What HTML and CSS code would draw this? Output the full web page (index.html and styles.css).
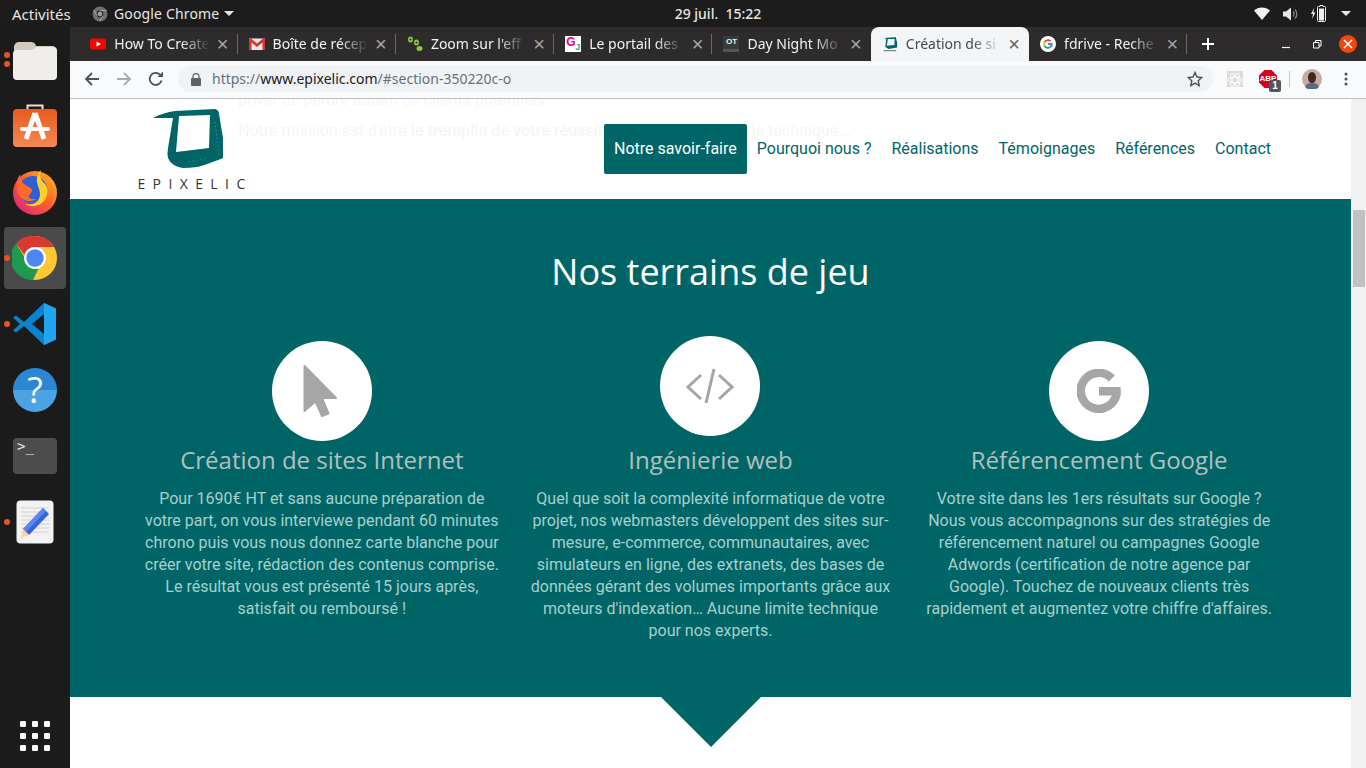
FILE: index.html
```html
<!DOCTYPE html>
<html lang="fr">
<head>
  <meta charset="UTF-8" />
  <title>Création de sites Internet - Epixelic</title>
  <meta name="viewport" content="width=device-width, initial-scale=1.0" />
  <link rel="stylesheet" href="styles.css">
</head>
<body>
  <!-- Ubuntu top bar -->
  <div class="topbar">
    <div class="topbar-left">
      <span class="activities">Activités</span>
      <svg class="app-icon" width="16" height="16" viewBox="0 0 16 16"><circle cx="8" cy="8" r="7.5" fill="#6e6e6e"/><circle cx="8" cy="8" r="3.4" fill="#1c1c1c"/><circle cx="8" cy="8" r="2.4" fill="#9a9a9a"/><path d="M8 4.6h6.6M5 9.8 2 4M11 9.8 7.5 15" stroke="#a8a8a8" stroke-width="1"/></svg>
      <span class="app-name">Google Chrome</span>
      <span class="caret"></span>
    </div>
    <div class="clock">29 juil.&nbsp;&nbsp;15:22</div>
    <div class="tray">
      <svg width="16" height="13" viewBox="0 0 16 13"><path d="M0 3.6C4.4-.6 11.600-.6 16 3.600L8 13z" fill="#f2f2f2"/></svg>
      <svg width="15" height="14" viewBox="0 0 15 14"><path d="M0 4.500h3L8 .5v13L3 9.500H0z" fill="#e6e6e6"/><path d="M10 4.500a3.500 3.500 0 0 1 0 5M12 2.500a6.500 6.500 0 0 1 0 9" fill="none" stroke="#888" stroke-width="1.200"/></svg>
      <svg width="15" height="17" viewBox="0 0 15 17"><path d="M3 3 0 9h2l-1 5 3.500-6.500h-2z" fill="#eee"/><path d="M8 1.500h1V.5h3v1h1.500a1 1 0 0 1 1 1v13a1 1 0 0 1-1 1H7.500a1 1 0 0 1-1-1v-13a1 1 0 0 1 1-1z" fill="none" stroke="#eee"/><rect x="8" y="3.500" width="5" height="12" fill="#eee"/></svg>
      <span class="caret"></span>
    </div>
  </div>

  <div class="desktop">
    <!-- launcher -->
    <aside class="dock">
      <div class="dock-item">
        <span class="dot dot-a"></span><span class="dot dot-b"></span>
        <svg width="46" height="42" viewBox="0 0 46 42"><path d="M2 8a5 5 0 0 1 5-5h12q4 0 5 4h16a5 5 0 0 1 5 5v24a5 5 0 0 1-5 5H7a5 5 0 0 1-5-5z" fill="#cfcbbf"/><path d="M1 15a4 4 0 0 1 4-4h14q3 0 5-3h17a4 4 0 0 1 4 4v25a4 4 0 0 1-4 4H5a4 4 0 0 1-4-4z" fill="#efeeea"/></svg>
      </div>
      <div class="dock-item">
        <svg width="46" height="46" viewBox="0 0 46 46"><defs><linearGradient id="bag" x1="0" y1="0" x2="0" y2="1"><stop offset="0" stop-color="#e95a1c"/><stop offset="1" stop-color="#f28a54"/></linearGradient></defs><path d="M15.500 9V2.500h15V9" fill="none" stroke="#f3dccd" stroke-width="2"/><rect x="1" y="6" width="44" height="38" rx="4" fill="url(#bag)"/><path d="M23 10 14 36M23 10l9 26" fill="none" stroke="#fff" stroke-width="5"/><rect x="8" y="24" width="30" height="4" rx="2" fill="#fff"/></svg>
      </div>
      <div class="dock-item">
        <svg width="46" height="46" viewBox="0 0 46 46"><defs><linearGradient id="fx" x1="1" y1="0" x2="0" y2="1"><stop offset="0" stop-color="#ffc21f"/><stop offset=".5" stop-color="#ff5a2c"/><stop offset="1" stop-color="#d41c8f"/></linearGradient></defs><circle cx="23" cy="24" r="22" fill="url(#fx)"/><circle cx="21" cy="21" r="14" fill="#2f5fd6"/><path d="M29 1c-2 6 0 10 4 14 4 5 3 14-3 19-5 4-12 4-17 1 9 2 15-3 15-10 0-6-4-9-3-16 1-4 2-6 4-8z" fill="#ffd02a"/><path d="M8 5c0 6 2 9 7 12 5 2 7 5 3 8-3 3 0 6 7 5-8 5-18 1-20-9-1-6 0-11 3-16z" fill="#ff6a2a"/></svg>
      </div>
      <div class="dock-item is-active">
        <span class="dot"></span>
        <svg width="46" height="46" viewBox="0 0 46 46"><circle cx="23" cy="23" r="22" fill="#fcc934"/><path d="M23 1a22 22 0 0 1 19 11H23a11 11 0 0 0-10.500 8L4 8.500A22 22 0 0 1 23 1z" fill="#d93a2f"/><path d="M4 8.500 13 23a11 11 0 0 0 13.500 10.500L21 45A22 22 0 0 1 4 8.500z" fill="#1e9a4e"/><circle cx="23" cy="23" r="11" fill="#fff"/><circle cx="23" cy="23" r="8.700" fill="#4c86f0"/></svg>
      </div>
      <div class="dock-item">
        <span class="dot"></span>
        <svg width="44" height="44" viewBox="0 0 44 44"><path d="M31 1 43 6.500v31L31 43 11 24 3 30.500 0 28.500 7 22 0 15.500 3 13.500l8 6.500z" fill="#0a84cf"/><path d="M31 1 43 6.500v31L31 43z" fill="#22a5f1"/><path d="M31 12 19 22l12 10z" fill="#1b1b1b"/></svg>
      </div>
      <div class="dock-item">
        <div class="help-icon">?</div>
      </div>
      <div class="dock-item">
        <div class="term-icon">&gt;_</div>
      </div>
      <div class="dock-item">
        <span class="dot"></span>
        <svg width="38" height="44" viewBox="0 0 38 44"><rect x=".5" y=".5" width="37" height="43" rx="4" fill="#f2f2f2"/><path d="M5 8h28M5 12h28M5 16h28M5 20h28M5 24h28M5 28h28M5 32h28" stroke="#d2d2d2"/><path d="M27 8l6 6-20 21-6-6z" fill="#3764d8"/><path d="M27 8l3 3-20 21-3-3z" fill="#5a86ee"/><path d="M7 29l6 6-8 3z" fill="#f5d6a8"/></svg>
      </div>
      <div class="apps-grid">
        <i></i><i></i><i></i><i></i><i></i><i></i><i></i><i></i><i></i>
      </div>
    </aside>

    <div class="window">
      <!-- tabs -->
      <div class="tabstrip">
        <div class="tab">
          <svg class="favicon" width="16" height="16" viewBox="0 0 16 16"><rect y="2.500" width="16" height="11" rx="3" fill="#f00"/><path d="M6.500 5.500 11 8l-4.500 2.500z" fill="#fff"/></svg>
          <span class="tab-title">How To Create</span><span class="tab-close">×</span>
        </div>
        <div class="tab">
          <svg class="favicon" width="16" height="16" viewBox="0 0 16 16"><rect y="2.500" width="16" height="11.500" fill="#e8e8e8"/><path d="M0 2.500h2l6 5 6-5h2V14h-2.500V6.500L8 11 2.500 6.500V14H0z" fill="#d9352b"/></svg>
          <span class="tab-title">Boîte de récep</span><span class="tab-close">×</span>
        </div>
        <div class="tab">
          <svg class="favicon" width="16" height="16" viewBox="0 0 16 16"><ellipse cx="3.500" cy="3.500" rx="2.500" ry="3" fill="#8dc63f"/><ellipse cx="9.500" cy="6.500" rx="2.500" ry="3" fill="#8dc63f"/><ellipse cx="12.500" cy="12.500" rx="3" ry="2.500" fill="#8dc63f"/><circle cx="3.500" cy="3.500" r="1" fill="#2d2b2c"/><circle cx="9.500" cy="6.500" r="1" fill="#2d2b2c"/></svg>
          <span class="tab-title">Zoom sur l'eff</span><span class="tab-close">×</span>
        </div>
        <div class="tab">
          <span class="favicon fav-gj"><b>G</b><i>J</i></span>
          <span class="tab-title">Le portail des</span><span class="tab-close">×</span>
        </div>
        <div class="tab">
          <span class="favicon fav-ot">OT</span>
          <span class="tab-title">Day Night Mo</span><span class="tab-close">×</span>
        </div>
        <div class="tab is-active">
          <svg class="favicon" width="16" height="16" viewBox="0 0 72 72"><path fill-rule="evenodd" fill="#006567" d="M10 10 22 8l40-2 6 24v22l-38 7-15-9 4-38zM26 14l-4 30 34-4 1-27z"/><path d="M8 66h56" stroke="#777" stroke-width="5"/></svg>
          <span class="tab-title">Création de si</span><span class="tab-close">×</span>
        </div>
        <div class="tab">
          <svg class="favicon" width="16" height="16" viewBox="0 0 16 16"><circle cx="8" cy="8" r="8" fill="#fff"/><path d="M8 3.200a4.800 4.800 0 0 1 3.200 1.200l-1.200 1.300A3 3 0 0 0 5.200 7L3.700 5.800A4.800 4.800 0 0 1 8 3.200z" fill="#ea4335"/><path d="M3.700 5.800 5.200 7a3 3 0 0 0 0 2L3.700 10.200a4.800 4.800 0 0 1 0-4.400z" fill="#fbbc05"/><path d="M3.700 10.200 5.200 9a3 3 0 0 0 4.400 1.600l1.400 1.100A4.800 4.800 0 0 1 3.700 10.200z" fill="#34a853"/><path d="M8.100 7.100h4.600a5 5 0 0 1-1.700 4.600L9.600 10.600a2 2 0 0 0 .9-1.700H8.100z" fill="#4285f4"/></svg>
          <span class="tab-title">fdrive - Reche</span><span class="tab-close">×</span>
        </div>
        <div class="new-tab">
          <svg width="12" height="12" viewBox="0 0 12 12"><path d="M6 0v12M0 6h12" stroke="#fff" stroke-width="2"/></svg>
        </div>
        <div class="win-controls">
          <svg width="10" height="10" viewBox="0 0 10 10"><path d="M1 8.500h8" stroke="#fff" stroke-width="1.200"/></svg>
          <svg width="10" height="10" viewBox="0 0 10 10"><path d="M1.500 3.500h5.500v5.500H1.500zM3.500 3.500V1.500H9V7H7" fill="none" stroke="#fff"/></svg>
          <span class="win-close"><svg width="10" height="10" viewBox="0 0 10 10"><path d="M1 1l8 8M9 1l-8 8" stroke="#fff" stroke-width="1.500"/></svg></span>
        </div>
      </div>

      <!-- address bar -->
      <div class="toolbar">
        <svg class="tool" width="16" height="16" viewBox="0 0 16 16"><path d="M15 8H2M8 2 2 8l6 6" fill="none" stroke="#4d5156" stroke-width="1.800"/></svg>
        <svg class="tool" width="16" height="16" viewBox="0 0 16 16"><path d="M1 8h13M8 2l6 6-6 6" fill="none" stroke="#a8abae" stroke-width="1.800"/></svg>
        <svg class="tool" width="16" height="16" viewBox="0 0 16 16"><path d="M13.500 9.500A6 6 0 1 1 12 3.700" fill="none" stroke="#4d5156" stroke-width="1.800"/><path d="M9.500 6H15V.5z" fill="#4d5156"/></svg>
        <div class="omnibox">
          <svg width="10" height="13" viewBox="0 0 10 13"><path d="M2 5.500V3.500a3 3 0 0 1 6 0v2" fill="none" stroke="#5f6368" stroke-width="1.300"/><rect y="5" width="10" height="8" rx="1" fill="#5f6368"/></svg>
          <span class="url"><span class="url-dim">https://</span>www.epixelic.com<span class="url-dim">/#section-350220c-o</span></span>
          <svg class="star" width="16" height="16" viewBox="0 0 16 16"><path d="m8 1.500 2 4.500 4.800.5-3.600 3.200 1 4.800L8 12.100l-4.200 2.400 1-4.800L1.200 6.500 6 6z" fill="none" stroke="#4d5156" stroke-width="1.400"/></svg>
        </div>
        <div class="ext-atom">
          <svg width="16" height="16" viewBox="0 0 16 16"><g fill="none" stroke="#fff"><ellipse cx="8" cy="8" rx="7" ry="3"/><ellipse cx="8" cy="8" rx="7" ry="3" transform="rotate(60 8 8)"/><ellipse cx="8" cy="8" rx="7" ry="3" transform="rotate(120 8 8)"/></g></svg>
        </div>
        <div class="ext-abp">
          <span class="abp-sign">ABP</span>
          <span class="abp-count">1</span>
        </div>
        <span class="tool-sep"></span>
        <svg class="avatar" width="20" height="20" viewBox="0 0 20 20"><circle cx="10" cy="10" r="10" fill="#c9aaa4"/><path d="M3 18q1-4 7-4t7 4a10 10 0 0 1-14 0z" fill="#5a6a8a"/><ellipse cx="10" cy="8.500" rx="4" ry="5.500" fill="#3d2a22"/></svg>
        <svg class="menu-dots" width="4" height="14" viewBox="0 0 4 14"><circle cx="2" cy="2" r="1.500"/><circle cx="2" cy="7" r="1.500"/><circle cx="2" cy="12" r="1.500"/></svg>
      </div>

      <div class="viewport">
        <main class="page">
          <header class="site-header">
            <div class="ghost-text">
              <p>priver de perdre autant de clients potentiels.</p>
              <p>Notre mission est d'être <b>le tremplin de votre réussite</b>, nous gérons toute la technique...</p>
            </div>
            <a class="logo">
              <svg width="72" height="62" viewBox="0 0 72 62"><path fill-rule="evenodd" fill="#006567" d="M0 10C8 6 14 4 22 3L62 1Q66 2 66 6L70 30V50Q50 58 44 59 36 60 30 60Q18 58 15 50Q14 46 15 40L20 10Q10 10 0 10ZM26 8 23 44 56 40 57 7Z"/><path d="M36 54l18-4M62 14l4 34" stroke="#6fa8a8" stroke-width=".8" stroke-dasharray="1 3" fill="none"/></svg>
              <span class="logo-name">EPIXELIC</span>
            </a>
            <nav class="nav">
              <a class="nav-link is-current">Notre savoir-faire</a>
              <a class="nav-link">Pourquoi nous ?</a>
              <a class="nav-link">Réalisations</a>
              <a class="nav-link">Témoignages</a>
              <a class="nav-link">Références</a>
              <a class="nav-link">Contact</a>
            </nav>
          </header>

          <section class="skills">
            <h2>Nos terrains de jeu</h2>
            <div class="skills-grid">
              <article class="skill">
                <div class="skill-icon">
                  <svg width="38" height="54" viewBox="0 0 38 54"><path d="M1.500 2V47L12.500 37.500 19 52 25.500 49.500 19 34H33z" fill="#a6a6a6" stroke="#a6a6a6" stroke-width="2" stroke-linejoin="round"/></svg>
                </div>
                <h3>Création de sites Internet</h3>
                <p>Pour 1690€ HT et sans aucune préparation de votre part, on vous interviewe pendant 60 minutes chrono puis vous nous donnez carte blanche pour créer votre site, rédaction des contenus comprise. Le résultat vous est présenté 15 jours après, satisfait ou remboursé !</p>
              </article>
              <article class="skill">
                <div class="skill-icon is-raised">
                  <svg width="48" height="38" viewBox="0 0 48 38"><path d="M15 8 2 20l13 12M33 8l13 12-13 12M28 2l-8 34" fill="none" stroke="#a6a6a6" stroke-width="3"/></svg>
                </div>
                <h3>Ingénierie web</h3>
                <p>Quel que soit la complexité informatique de votre projet, nos webmasters développent des sites sur-mesure, e-commerce, communautaires, avec simulateurs en ligne, des extranets, des bases de données gérant des volumes importants grâce aux moteurs d'indexation… Aucune limite technique pour nos experts.</p>
              </article>
              <article class="skill">
                <div class="skill-icon">
                  <svg width="44" height="44" viewBox="0 0 44 44"><path d="M34.800 9.500A18 18 0 1 0 39.600 24" fill="none" stroke="#a6a6a6" stroke-width="8.500"/><path d="M22 18H43.500Q44 22 43.500 26.500H22z" fill="#a6a6a6"/></svg>
                </div>
                <h3>Référencement Google</h3>
                <p>Votre site dans les 1ers résultats sur Google ? Nous vous accompagnons sur des stratégies de référencement naturel ou campagnes Google Adwords (certification de notre agence par Google). Touchez de nouveaux clients très rapidement et augmentez votre chiffre d'affaires.</p>
              </article>
            </div>
            <span class="skills-arrow"></span>
          </section>
        </main>
        <div class="scrollbar"><span class="scroll-thumb"></span></div>
      </div>
    </div>
  </div>
</body>
</html>
```

FILE: styles.css
```css
* {
  box-sizing: border-box;
}

html,
body {
  margin: 0;
  height: 100%;
  overflow: hidden;
}

body {
  display: flex;
  flex-direction: column;
  font-family: 'Open Sans', 'Noto Sans', sans-serif;
  background: #1b1b1b;
}

/* top bar */
.topbar {
  height: 27px;
  flex: none;
  display: grid;
  grid-template-columns: 1fr auto 1fr;
  align-items: center;
  background: #1c1c1c;
  color: #e6e6e6;
  font-family: 'Noto Sans', sans-serif;
  font-size: 14px;
}

.topbar-left {
  display: flex;
  align-items: center;
  padding-left: 12px;
}

.activities {
  width: 80px;
  font-size: 15px;
}

.app-name {
  margin-left: 6px;
  letter-spacing: 0.15px;
}

.caret {
  width: 0;
  height: 0;
  margin-left: 5px;
  border-left: 5px solid transparent;
  border-right: 5px solid transparent;
  border-top: 5px solid #e6e6e6;
}

.clock {
  padding-left: 70px;
  font-weight: 500;
}

.tray {
  display: flex;
  align-items: center;
  justify-content: flex-end;
  gap: 13px;
  padding-right: 15px;
}

.tray .caret {
  margin-left: 2px;
}

.desktop {
  flex: 1;
  display: flex;
  min-height: 0;
}

/* launcher */
.dock {
  width: 70px;
  flex: none;
  display: flex;
  flex-direction: column;
  background: #1b1b1b;
}

.dock-item {
  position: relative;
  height: 66px;
  margin: 0 4px;
  display: flex;
  align-items: center;
  justify-content: center;
  border-radius: 4px;
}

.dock-item.is-active {
  height: 62px;
  margin: 2px 4px;
  background: #4a4a4a;
}

.dot {
  position: absolute;
  left: 0;
  top: 30px;
  width: 6px;
  height: 6px;
  border-radius: 50%;
  background: #e95420;
}

.dot-a {
  top: 25px;
}

.dot-b {
  top: 34px;
}

.dock-item.is-active .dot {
  top: 28px;
}

.help-icon {
  width: 44px;
  height: 44px;
  border-radius: 50%;
  background: linear-gradient(#2b87d3 50%, #4ba3e3 50%);
  color: #fff;
  font: 400 36px/44px 'Open Sans', sans-serif;
  text-align: center;
}

.term-icon {
  width: 44px;
  height: 36px;
  padding: 0 4px;
  border-radius: 4px;
  background: #4c4c4c;
  color: #eee;
  font: 14px/17px 'DejaVu Sans Mono', monospace;
}

.apps-grid {
  margin: auto 0 17px 20px;
  display: grid;
  grid-template-columns: repeat(3, 6px);
  gap: 6px;
}

.apps-grid i {
  height: 6px;
  border-radius: 1px;
  background: #f8f8f8;
}

.window {
  flex: 1;
  min-width: 0;
  display: flex;
  flex-direction: column;
}

/* tabs */
.tabstrip {
  height: 34px;
  flex: none;
  display: flex;
  align-items: stretch;
  padding-left: 9.3px;
  background: #2d2b2c;
  color: #f1f3f4;
  font-family: 'Noto Sans', sans-serif;
  font-size: 14px;
}

.tab {
  width: 158.3px;
  flex: none;
  display: flex;
  align-items: center;
  padding: 0 8px 0 11px;
  position: relative;
}

.tab::after {
  content: '';
  position: absolute;
  right: 0;
  top: 7px;
  bottom: 7px;
  width: 1px;
  background: #6a6869;
}

.tab:nth-child(5)::after,
.tab.is-active::after {
  display: none;
}

.tab.is-active {
  background: #f3f5f7;
  color: #45494d;
  border-radius: 8px 8px 0 0;
}

.favicon {
  width: 16px;
  height: 16px;
  flex: none;
}

.fav-gj {
  display: block;
  position: relative;
  background: #fff;
  font: 700 12px/12px 'Liberation Sans', sans-serif;
  overflow: hidden;
}

.fav-gj b {
  color: #e6007e;
  margin-left: 1px;
}

.fav-gj i {
  position: absolute;
  right: 1px;
  bottom: 0;
  font-style: normal;
  font-size: 9px;
  line-height: 9px;
  color: #2aa889;
}

.fav-ot {
  display: block;
  background: #3a3a3a;
  color: #eee;
  font: 700 8px/12px 'Liberation Sans', sans-serif;
  text-align: center;
  border-bottom: 3px solid #555;
}

.tab-title {
  flex: 1;
  min-width: 0;
  margin-left: 8px;
  padding-bottom: 2px;
  white-space: nowrap;
  overflow: hidden;
  -webkit-mask-image: linear-gradient(to right, #000 70%, transparent 100%);
  mask-image: linear-gradient(to right, #000 70%, transparent 100%);
}

.tab-close {
  width: 14px;
  margin-left: 6px;
  color: #a8a8a8;
  font: 20px/20px 'Liberation Sans', sans-serif;
  text-align: center;
}

.tab.is-active .tab-close {
  color: #5f6368;
}

.new-tab {
  width: 34px;
  display: flex;
  align-items: center;
  justify-content: center;
  margin-left: 4px;
}

.win-controls {
  margin-left: auto;
  display: flex;
  align-items: center;
  gap: 21px;
  padding-right: 9px;
}

.win-close {
  width: 18px;
  height: 18px;
  margin-left: -4px;
  display: flex;
  align-items: center;
  justify-content: center;
  border-radius: 50%;
  background: #f0480f;
}

/* address bar */
.toolbar {
  height: 38px;
  flex: none;
  display: flex;
  align-items: center;
  padding: 0 0 1px 14px;
  background: #f9fafb;
  border-bottom: 1px solid #b9c0c8;
}

.tool {
  flex: none;
  margin-right: 16px;
}

.omnibox {
  width: 1035px;
  height: 26px;
  margin-left: -2px;
  display: flex;
  align-items: center;
  padding: 0 10px 0 13px;
  border-radius: 13px;
  background: #f0f3f5;
}

.url {
  margin-left: 11px;
  padding-bottom: 2px;
  color: #202124;
  font-family: 'Noto Sans', sans-serif;
  font-size: 14px;
}

.url-dim {
  color: #6b7075;
}

.star {
  margin-left: auto;
}

.ext-atom {
  width: 16px;
  height: 16px;
  margin-left: 14px;
  background: #dcdcdc;
}

.ext-abp {
  position: relative;
  width: 18px;
  height: 18px;
  margin-left: 16px;
}

.abp-sign {
  display: block;
  height: 18px;
  clip-path: polygon(30% 0, 70% 0, 100% 30%, 100% 70%, 70% 100%, 30% 100%, 0 70%, 0 30%);
  background: #d9001b;
  color: #fff;
  font: 700 8px/18px 'Liberation Sans', sans-serif;
  text-align: center;
}

.abp-count {
  position: absolute;
  right: -4px;
  bottom: -4px;
  width: 12px;
  height: 12px;
  border-radius: 2px;
  background: #555;
  color: #fff;
  font: 700 10px/12px 'Liberation Sans', sans-serif;
  text-align: center;
}

.tool-sep {
  width: 1px;
  height: 16px;
  margin-left: 12px;
  background: #c8c8c8;
}

.avatar {
  margin-left: 12px;
}

.menu-dots {
  margin-left: 22px;
  fill: #4d5156;
}

.viewport {
  flex: 1;
  min-height: 0;
  display: flex;
}

.page {
  flex: 1;
  min-width: 0;
  background: #fff;
  font-family: 'Roboto', sans-serif;
}

/* site header */
.site-header {
  position: relative;
  height: 100px;
  display: flex;
  align-items: center;
  justify-content: space-between;
  padding: 0 70px;
  overflow: hidden;
  background: #fff;
}

.ghost-text {
  position: absolute;
  left: 168px;
  top: -10px;
  width: 700px;
  color: #f6f6f6;
  font-size: 16px;
  line-height: 22px;
}

.ghost-text p {
  margin: 0 0 9px;
}

.logo {
  position: relative;
  width: 110px;
  display: flex;
  flex-direction: column;
  align-items: center;
}

.logo svg {
  margin-right: 13px;
}

.logo-name {
  margin-top: 7px;
  color: #333;
  font-family: 'Open Sans', sans-serif;
  font-size: 14px;
  line-height: 14px;
  letter-spacing: 7.4px;
  white-space: nowrap;
}

.nav {
  position: relative;
  display: flex;
  align-items: center;
}

.nav-link {
  padding: 0 10px;
  color: #006567;
  font-size: 16px;
  line-height: 50px;
}

.nav-link.is-current {
  background: #006567;
  color: #fff;
  border-radius: 2px;
}

/* teal section */
.skills {
  position: relative;
  height: 498px;
  padding: 0 57.5px;
  background: #006567;
  font-family: 'Roboto', sans-serif;
}

.skills h2 {
  margin: 0;
  padding-top: 48px;
  color: #fff;
  font-family: 'Open Sans', sans-serif;
  font-size: 36px;
  font-weight: 400;
  line-height: 50px;
  text-align: center;
}

.skills-grid {
  display: grid;
  grid-template-columns: repeat(3, 1fr);
  margin-top: 44px;
}

.skill {
  padding: 0 14px;
  text-align: center;
}

.skill-icon {
  width: 100px;
  height: 100px;
  margin: 0 auto;
  display: flex;
  align-items: center;
  justify-content: center;
  border-radius: 50%;
  background: #fff;
}

.skill-icon.is-raised {
  transform: translateY(-5px);
}

.skill h3 {
  margin: 0;
  padding-top: 1px;
  color: #b3bfbe;
  font-family: 'Open Sans', sans-serif;
  font-size: 24px;
  font-weight: 400;
  line-height: 36px;
  white-space: nowrap;
}

.skill p {
  margin: 10px 0 0;
  color: #a8cfcc;
  font-size: 16px;
  line-height: 22px;
}

.skills-arrow {
  position: absolute;
  left: 591px;
  bottom: -50px;
  width: 0;
  height: 0;
  border-left: 50px solid transparent;
  border-right: 50px solid transparent;
  border-top: 50px solid #006567;
}

.scrollbar {
  width: 15px;
  flex: none;
  padding: 111px 1px 0 2px;
  background: #f1f1f1;
}

.scroll-thumb {
  display: block;
  height: 77px;
  background: #c1c1c1;
}
```
